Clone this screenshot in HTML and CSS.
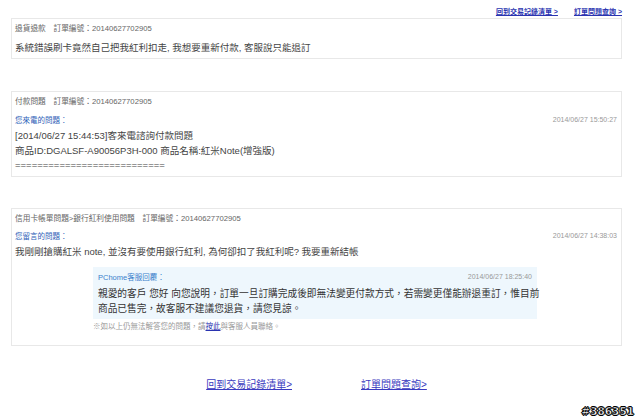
FILE: index.html
```html
<!DOCTYPE html>
<html lang="zh-Hant">
<head>
<meta charset="utf-8">
<title>訂單問題</title>
<link rel="stylesheet" href="styles.css">
</head>
<body>
<div class="page">
  <div class="toplinks">
    <a href="#" class="tlink">回到交易記錄清單 &gt;</a>
    <a href="#" class="tlink">訂單問題查詢 &gt;</a>
  </div>

  <div class="card c1">
    <div class="head">退貨退款　訂單編號：20140627702905</div>
    <div class="body b1">系統錯誤刷卡竟然自己把我紅利扣走, 我想要重新付款, 客服說只能退訂</div>
  </div>

  <div class="card c2">
    <div class="head">付款問題　訂單編號：20140627702905</div>
    <div class="labelrow"><span class="label">您來電的問題：</span><span class="date">2014/06/27 15:50:27</span></div>
    <div class="body b2">[2014/06/27 15:44:53]客來電諮詢付款問題<br>商品ID:DGALSF-A90056P3H-000 商品名稱:紅米Note(增強版)<br>===========================</div>
  </div>

  <div class="card c3">
    <div class="head">信用卡帳單問題&gt;銀行紅利使用問題　訂單編號：20140627702905</div>
    <div class="labelrow"><span class="label">您留言的問題：</span><span class="date">2014/06/27 14:38:03</span></div>
    <div class="body b3">我剛剛搶購紅米 note, 並沒有要使用銀行紅利, 為何卻扣了我紅利呢? 我要重新結帳</div>
    <div class="reply">
      <div class="labelrow rrow"><span class="rlabel">PChome客服回覆：</span><span class="date">2014/06/27 18:25:40</span></div>
      <div class="rtext">親愛的客戶 您好 向您說明，訂單一旦訂購完成後即無法變更付款方式，若需變更僅能辦退重訂，惟目前<br>商品已售完，故客服不建議您退貨，請您見諒。</div>
    </div>
    <div class="note">※如以上仍無法解答您的問題，請<a href="#" class="nlink">按此</a>與客服人員聯絡。</div>
  </div>

  <div class="bottomlinks">
    <a href="#" class="blink">回到交易記錄清單&gt;</a>
    <a href="#" class="blink">訂單問題查詢&gt;</a>
  </div>
</div>
<div class="watermark">#386351</div>
</body>
</html>
```

FILE: styles.css
```css
html, body {
  margin: 0;
  padding: 0;
  background: #ffffff;
}
body {
  font-family: "Liberation Sans", "Noto Sans CJK TC", sans-serif;
  color: #444;
  width: 640px;
  height: 420px;
  overflow: hidden;
  position: relative;
}
.page {
  width: 611px;
  margin-left: 11px;
}
.toplinks {
  display: flex;
  justify-content: flex-end;
  gap: 16px;
  padding-top: 7px;
  height: 11px;
}
.tlink {
  font-size: 7px;
  line-height: 10px;
  color: #2a33b0;
  font-weight: bold;
  text-decoration: underline;
}
.card {
  border: 1px solid #e8e8e8;
  padding: 4px 4px 3px 3px;
  background: #fff;
}
.c1 { margin-top: 0; }
.c2 { margin-top: 32px; }
.c3 { margin-top: 31px; padding-bottom: 12px; }
.head {
  font-size: 7.7px;
  line-height: 12px;
  color: #666;
}
.body {
  font-size: 9.5px;
  line-height: 14px;
  color: #444;
}
.b1 { margin-top: 6px; }
.b2 { margin-top: 4px; line-height: 14.5px; }
.b3 { margin-top: 3px; }
.labelrow {
  display: flex;
  justify-content: space-between;
  align-items: center;
  height: 12px;
  margin-top: 5px;
}
.label {
  font-size: 7.5px;
  color: #2f5fb8;
}
.date {
  font-size: 7px;
  color: #999;
}
.reply {
  margin: 8px 80px 0 78px;
  background: #eef7fd;
  padding: 4px 5px 3px 5px;
}
.rrow { margin-top: 0; }
.rlabel {
  font-size: 7.5px;
  color: #3a7fcc;
}
.rtext {
  margin-top: 3px;
  font-size: 9.7px;
  line-height: 15px;
  color: #333;
  white-space: nowrap;
}
.note {
  margin: 2px 0 0 78px;
  font-size: 7.5px;
  line-height: 12px;
  color: #999;
}
.nlink {
  color: #2a33b0;
  text-decoration: underline;
}
.bottomlinks {
  display: flex;
  justify-content: center;
  gap: 69px;
  margin-top: 33px;
}
.blink {
  font-size: 10px;
  line-height: 12px;
  color: #3a3ac0;
  text-decoration: underline;
}
.watermark {
  position: absolute;
  right: 6px;
  bottom: 3px;
  font-family: "DejaVu Sans", sans-serif;
  font-weight: bold;
  font-size: 10.5px;
  line-height: 12px;
  color: #fff;
  -webkit-text-stroke: 0.5px #000;
  text-shadow: 1px 0 0 #000, -1px 0 0 #000, 0 1px 0 #000, 0 -1px 0 #000;
}
```
